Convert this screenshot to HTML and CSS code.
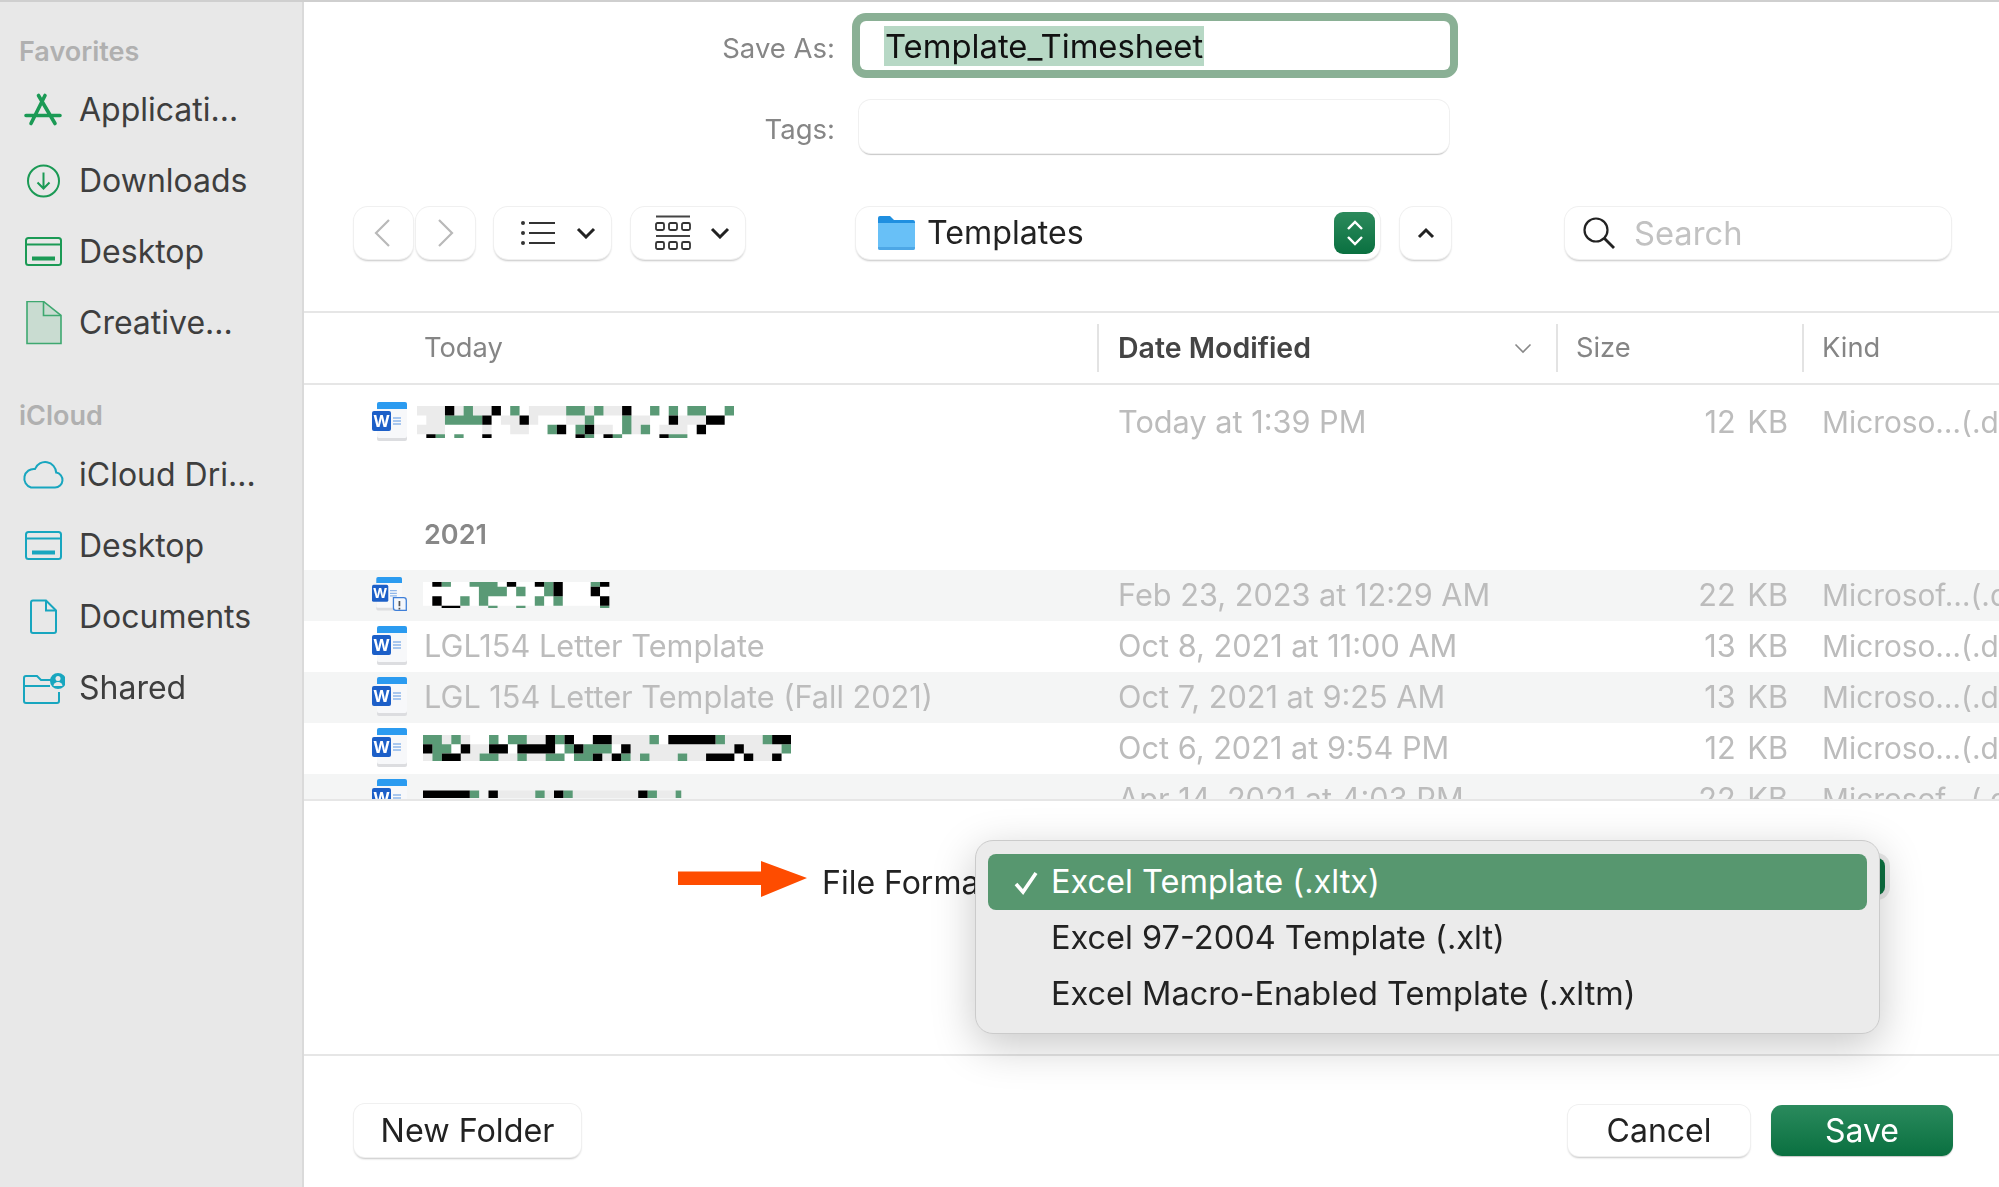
FILE: index.html
```html
<!DOCTYPE html>
<html lang="en">
<head>
<meta charset="utf-8">
<title>Save As</title>
<link rel="stylesheet" href="styles.css">
</head>
<body>
<svg class="defs" width="0" height="0" aria-hidden="true">
  <symbol id="word" viewBox="0 0 36 40">
    <rect x="5" y="2" width="30" height="37" rx="2" fill="#dcdde0"/>
    <rect x="5" y="0" width="30" height="36" rx="2" fill="#f7f8fa"/>
    <path d="M5 7V2a2 2 0 0 1 2-2h26a2 2 0 0 1 2 2v5z" fill="#2b9bf0"/>
    <path d="M21 16h8M21 19h8M21 22h8" stroke="#8fb6ea" stroke-width="1.4"/>
    <rect x="0" y="9" width="19" height="20" rx="2" fill="#1c5fc8"/>
    <text x="9.5" y="25" class="word-w">W</text>
  </symbol>
  <symbol id="desk" viewBox="0 0 44 44">
    <rect x="5" y="8" width="35" height="27" rx="2.5" fill="none" stroke="currentColor" stroke-width="2"/>
    <path d="M5 14.5h35" stroke="currentColor" stroke-width="2"/>
    <path d="M11 28.5h23" stroke="currentColor" stroke-width="4"/>
  </symbol>
</svg>

<div class="window">
  <aside class="sidebar">
    <h2 class="side-head">Favorites</h2>
    <div class="side-item green">
      <svg class="side-ic" viewBox="0 0 44 44"><path d="M17.5 7.500 34 35.500M24 7.500 10 35.500M5 27.500h34" fill="none" stroke="currentColor" stroke-width="3.600" stroke-linecap="round"/></svg>
      <span>Applicati...</span>
    </div>
    <div class="side-item green">
      <svg class="side-ic" viewBox="0 0 44 44"><circle cx="22.5" cy="22" r="15.5" fill="none" stroke="currentColor" stroke-width="2"/><path d="M22.5 13.5v16M16.5 23.5l6 6 6-6" fill="none" stroke="currentColor" stroke-width="2"/></svg>
      <span>Downloads</span>
    </div>
    <div class="side-item green">
      <svg class="side-ic"><use href="#desk"/></svg>
      <span>Desktop</span>
    </div>
    <div class="side-item green">
      <svg class="side-ic" viewBox="0 0 44 44"><path d="M6 .5h16.500L40 14.500v28H6z" fill="#c9dcd1" stroke="#3ea870" stroke-width="1.600"/><path d="M22.500 .5v14H40" fill="none" stroke="#3ea870" stroke-width="1.600"/></svg>
      <span>Creative...</span>
    </div>
    <h2 class="side-head second">iCloud</h2>
    <div class="side-item teal">
      <svg class="side-ic" viewBox="0 0 44 44"><path d="M10 34.500h24a7.500 7.500 0 0 0 1.200-14.900A11 11 0 0 0 14 16a9.500 9.500 0 0 0-4 18.500z" fill="none" stroke="currentColor" stroke-width="2"/></svg>
      <span>iCloud Dri...</span>
    </div>
    <div class="side-item teal">
      <svg class="side-ic"><use href="#desk"/></svg>
      <span>Desktop</span>
    </div>
    <div class="side-item teal">
      <svg class="side-ic" viewBox="0 0 44 44"><path d="M12 5.500h13l10 10V36a2 2 0 0 1-2 2H12a2 2 0 0 1-2-2V7.500a2 2 0 0 1 2-2z" fill="none" stroke="currentColor" stroke-width="2"/><path d="M25 5.500v10h10" fill="none" stroke="currentColor" stroke-width="2"/></svg>
      <span>Documents</span>
    </div>
    <div class="side-item teal">
      <svg class="side-ic" viewBox="0 0 44 44"><path d="M3 35V12a2 2 0 0 1 2-2h11l4 4h10M3 20h26M38 26v9a2 2 0 0 1-2 2H5a2 2 0 0 1-2-2" fill="none" stroke="currentColor" stroke-width="2"/><circle cx="37" cy="15" r="8" fill="currentColor"/><circle cx="37" cy="12.500" r="2.500" fill="#e8e8e8"/><path d="M32.500 20a4.500 4 0 0 1 9 0z" fill="#e8e8e8"/></svg>
      <span>Shared</span>
    </div>
  </aside>

  <main class="main">
    <section class="form">
      <div class="form-row">
        <label class="form-label">Save As:</label>
        <div class="field focused"><span class="selected">Template_Timesheet</span></div>
      </div>
      <div class="form-row tags-row">
        <label class="form-label">Tags:</label>
        <div class="field tags"></div>
      </div>
    </section>

    <section class="toolbar">
      <button class="btn nav prev"><svg width="18" height="30" viewBox="0 0 18 30"><path d="M16 2 3 15l13 13" fill="none" stroke="#b9b9b9" stroke-width="2.200"/></svg></button>
      <button class="btn nav next"><svg width="18" height="30" viewBox="0 0 18 30"><path d="m2 2 13 13L2 28" fill="none" stroke="#b9b9b9" stroke-width="2.200"/></svg></button>
      <button class="btn list">
        <svg width="34" height="26" viewBox="0 0 34 26"><path d="M8 3h26M8 13h26M8 23h26" stroke="#333" stroke-width="2"/><circle cx="2" cy="3" r="2" fill="#333"/><circle cx="2" cy="13" r="2" fill="#333"/><circle cx="2" cy="23" r="2" fill="#333"/></svg>
        <svg class="chev" width="20" height="12" viewBox="0 0 20 12"><path d="m2 2 8 8 8-8" fill="none" stroke="#222" stroke-width="3"/></svg>
      </button>
      <button class="btn view">
        <svg width="36" height="36" viewBox="0 0 36 36"><path d="M1 1.500h34M1 21h34" stroke="#444" stroke-width="2"/><g fill="none" stroke="#333" stroke-width="1.800"><rect x="1" y="8" width="8" height="7" rx="1.500"/><rect x="14" y="8" width="8" height="7" rx="1.500"/><rect x="27" y="8" width="8" height="7" rx="1.500"/><rect x="1" y="27" width="8" height="7" rx="1.500"/><rect x="14" y="27" width="8" height="7" rx="1.500"/><rect x="27" y="27" width="8" height="7" rx="1.500"/></g></svg>
        <svg class="chev" width="20" height="12" viewBox="0 0 20 12"><path d="m2 2 8 8 8-8" fill="none" stroke="#222" stroke-width="3"/></svg>
      </button>
      <button class="btn path">
        <svg width="37" height="36" viewBox="0 0 37 36"><path d="M0 3a2 2 0 0 1 2-2h10l4 4h19a2 2 0 0 1 2 2v6H0z" fill="#1f8fe0"/><path d="M0 8h37v25a2 2 0 0 1-2 2H2a2 2 0 0 1-2-2z" fill="#68c0f7"/><path d="M0 32h37v1a2 2 0 0 1-2 2H2a2 2 0 0 1-2-2z" fill="#4da7e6"/></svg>
        <span class="path-name">Templates</span>
        <span class="stepper"><svg width="20" height="30" viewBox="0 0 20 30"><path d="m3 11 7-7 7 7M3 19l7 7 7-7" fill="none" stroke="#fff" stroke-width="2.400"/></svg></span>
      </button>
      <button class="btn up"><svg width="18" height="12" viewBox="0 0 18 12"><path d="m2 10 7-7 7 7" fill="none" stroke="#222" stroke-width="3"/></svg></button>
      <div class="btn search">
        <svg width="34" height="34" viewBox="0 0 34 34"><circle cx="14" cy="14" r="11.500" fill="none" stroke="#222" stroke-width="2.200"/><path d="m22 22 10 10" stroke="#222" stroke-width="2.800"/></svg>
        <span>Search</span>
      </div>
    </section>

    <section class="cols">
      <div class="col name-col">Today</div>
      <div class="col date-col"><b>Date Modified</b><svg width="18" height="11" viewBox="0 0 18 11"><path d="m1.500 1.500 7.500 7.500 7.500-7.500" fill="none" stroke="#888" stroke-width="1.600"/></svg></div>
      <div class="col">Size</div>
      <div class="col">Kind</div>
    </section>

    <section class="files">
      <div class="row">
        <div class="fname">
          <svg class="doc"><use href="#word"/></svg>
          <svg class="px first" width="317" height="32" viewBox="0 0 34 3.400" preserveAspectRatio="none">
            <path class="px-l" d="M0 .5h3M4 .5h1M6 .5h2M12 .5h4M18 .5h1M20 .5h2M1 1.500h2M9 1.500h2M12 1.500h1M16 1.500h2M23 1.500h2M28 1.500h3M0 2.500h3M7 2.500h1M10 2.500h2M19 2.500h2M23 2.500h1M26 2.500h3"/>
            <path class="px-g" d="M5 .5h1M10 .5h1M16 .5h2M19 .5h1M25 .5h1M27 .5h1M29 .5h2M33 .5h1M3 1.500h4M18 1.500h1M22 1.500h1M14 2.500h1M17 2.500h1M22 2.500h1M24 2.500h1M2 3.500h1M4 3.500h1M18 3.500h1M21 3.500h1M27 3.500h2"/>
            <path class="px-k" d="M3 .5h1M8 .5h1M22 .5h1M7 1.500h1M11 1.500h1M27 1.500h1M31 1.500h2M15 2.500h1M18 2.500h1M30 2.500h1M1 3.500h1M7 3.500h1M17 3.500h1M20 3.500h1M26 3.500h1"/>
          </svg>
        </div>
        <div>Today at 1:39 PM</div>
        <div class="size">12 KB</div>
        <div class="kind">Microso…(.docx)</div>
      </div>

      <h3 class="group">2021</h3>

      <div class="row stripe">
        <div class="fname">
          <svg class="doc" viewBox="0 0 42 42"><use href="#word" width="36" height="40"/><path d="M25 24h12a3 3 0 0 1 3 3v12H28a3 3 0 0 1-3-3z" fill="#f4f7fc" stroke="#3f7fd8" stroke-width="1.500"/><path d="M32 28v6M32 36v2" stroke="#555" stroke-width="2"/></svg>
          <svg class="px second" width="191" height="26" viewBox="0 .5 20.500 2.750" preserveAspectRatio="none">
            <path class="px-w" d="M0 .5h1M3 .5h2M8 .5h1M10 .5h2M15 .5h3M0 1.500h6M9 1.500h1M11 1.500h2M15 1.500h3M19 1.500h1M0 2.500h1M2 2.500h2M5 2.500h1M7 2.500h5M13 2.500h1M15 2.500h4"/>
            <path class="px-g" d="M2 .5h1M5 .5h3M13 .5h1M18 .5h1M6 1.500h3M10 1.500h1M13 1.500h1M4 2.500h1M6 2.500h1M12 2.500h1M14 2.500h1M7 3.500h1M10 3.500h1M19 3.500h1"/>
            <path class="px-k" d="M1 .5h1M9 .5h1M12 .5h1M14 .5h1M19 .5h1M14 1.500h1M18 1.500h1M1 2.500h1M19 2.500h1M2 3.500h2"/>
          </svg>
        </div>
        <div>Feb 23, 2023 at 12:29 AM</div>
        <div class="size">22 KB</div>
        <div class="kind">Microsof…(.docx)</div>
      </div>

      <div class="row">
        <div class="fname"><svg class="doc"><use href="#word"/></svg><span class="ftext">LGL154 Letter Template</span></div>
        <div>Oct 8, 2021 at 11:00 AM</div>
        <div class="size">13 KB</div>
        <div class="kind">Microso…(.docx)</div>
      </div>

      <div class="row stripe">
        <div class="fname"><svg class="doc"><use href="#word"/></svg><span class="ftext">LGL 154 Letter Template (Fall 2021)</span></div>
        <div>Oct 7, 2021 at 9:25 AM</div>
        <div class="size">13 KB</div>
        <div class="kind">Microso…(.docx)</div>
      </div>

      <div class="row">
        <div class="fname">
          <svg class="doc"><use href="#word"/></svg>
          <svg class="px second" width="368" height="26" viewBox="0 0 39 2.800" preserveAspectRatio="none">
            <path class="px-l" d="M2 .5h1M4 .5h1M11 .5h2M20 .5h4M32 .5h4M5 1.500h2M22 1.500h11M34 1.500h4M0 2.500h1M4 2.500h2M8 2.500h2M11 2.500h2M19 2.500h1M22 2.500h1M24 2.500h3M28 2.500h2M35 2.500h2"/>
            <path class="px-g" d="M0 .5h2M3 .5h1M7 .5h1M9 .5h2M14 .5h1M24 .5h1M31 .5h1M36 .5h1M1 1.500h2M15 1.500h1M17 1.500h3M38 1.500h1M1 2.500h1M6 2.500h2M10 2.500h1M13 2.500h2M16 2.500h2M21 2.500h1M23 2.500h1M27 2.500h1"/>
            <path class="px-k" d="M13 .5h1M15 .5h1M18 .5h2M26 .5h5M37 .5h2M0 1.500h1M4 1.500h1M7 1.500h2M10 1.500h4M16 1.500h1M21 1.500h1M33 1.500h1M2 2.500h2M18 2.500h1M20 2.500h1M30 2.500h3M34 2.500h1M37 2.500h1"/>
          </svg>
        </div>
        <div>Oct 6, 2021 at 9:54 PM</div>
        <div class="size">12 KB</div>
        <div class="kind">Microso…(.docx)</div>
      </div>

      <div class="row stripe">
        <div class="fname">
          <svg class="doc"><use href="#word"/></svg>
          <svg class="px second" width="262" height="28" viewBox="0 0 28 3" preserveAspectRatio="none">
            <path class="px-l thin" d="M8 1h4M13 1h1M16 1h7M25 1h2"/>
            <path class="px-g thin" d="M5 1h1M12 1h1M15 1h1M24 1h1M27 1h.6"/>
            <path class="px-k thin" d="M0 1h5M7 1h1M14 1h1M23 1h1"/>
          </svg>
        </div>
        <div>Apr 14, 2021 at 4:03 PM</div>
        <div class="size">22 KB</div>
        <div class="kind">Microsof…(.docx)</div>
      </div>
    </section>

    <section class="format">
      <svg class="arrow" width="129" height="36" viewBox="0 0 129 36"><path d="M0 10.500h83V0l46 17-46 19V24H0z" fill="#fe4c00"/></svg>
      <span class="format-label">File Format:</span>
      <div class="popup-stub"></div>
      <div class="menu">
        <div class="menu-item active"><svg class="check" width="24" height="24" viewBox="0 0 24 24"><path d="m2 13 7 8L22 2" fill="none" stroke="#fff" stroke-width="3.600"/></svg>Excel Template (.xltx)</div>
        <div class="menu-item">Excel 97-2004 Template (.xlt)</div>
        <div class="menu-item">Excel Macro-Enabled Template (.xltm)</div>
      </div>
    </section>

    <footer class="footer">
      <button class="btn action new">New Folder</button>
      <button class="btn action cancel">Cancel</button>
      <button class="btn action save">Save</button>
    </footer>
  </main>
</div>
</body>
</html>
```

FILE: styles.css
```css
* { box-sizing: border-box; }
html, body { margin: 0; padding: 0; }
body {
  width: 1999px;
  height: 1187px;
  overflow: hidden;
  background: #fff;
  font-family: Inter, "Noto Sans", sans-serif;
  color: #222;
}
.defs { position: absolute; }
.word-w { font: 700 16px Inter, sans-serif; fill: #fff; text-anchor: middle; }

.window {
  display: grid;
  grid-template-columns: 304px 1fr;
  height: 1187px;
  border-top: 2px solid #cfcfcf;
  filter: blur(.45px);
}

/* sidebar */
.sidebar {
  background: #e8e8e8;
  border-right: 2px solid #dadada;
  padding-top: 30px;
}
.side-head {
  margin: 0 0 2px;
  padding-left: 19px;
  height: 40px;
  font-size: 27px;
  line-height: 40px;
  font-weight: 600;
  color: #b0b0b0;
}
.side-head.second { margin-top: 38px; margin-bottom: 3px; }
.side-item {
  display: flex;
  align-items: center;
  gap: 14px;
  height: 71px;
  padding-left: 21px;
  font-size: 32px;
  color: #3e3e3e;
}
.side-ic { width: 44px; height: 44px; flex: none; }
.green .side-ic { color: #1b9a55; }
.teal .side-ic { color: #18a6bf; }

/* form */
.main { display: flex; flex-direction: column; min-width: 0; }
.form { padding-top: 19px; }
.form-row { display: flex; align-items: center; height: 49px; }
.tags-row { height: 53px; margin-top: 30px; }
.form-label {
  width: 531px;
  padding-top: 4px;
  text-align: right;
  font-size: 27.500px;
  color: #868686;
}
.field {
  margin-left: 24px;
  width: 590px;
  height: 100%;
  background: #fff;
  border-radius: 8px;
  display: flex;
  align-items: center;
}
.field.focused {
  margin-left: 25px;
  box-shadow: 0 0 0 8px #8ab095;
  border-radius: 6px;
  padding-left: 24px;
}
.field.tags { box-shadow: 0 0 0 1px #f0f0f0, 0 2px 1px #c8c8c8; border-radius: 12px; }
.selected {
  background: #b7d8c5;
  color: #111;
  font-size: 32.800px;
  line-height: 40px;
  padding: 0 1px;
}

/* toolbar */
.toolbar {
  display: flex;
  align-items: stretch;
  height: 52px;
  margin-top: 54px;
  padding-left: 50px;
}
.btn {
  font-family: inherit;
  border: 0;
  padding: 0;
  background: #fff;
  border-radius: 14px;
  box-shadow: 0 0 0 1px #f0f0f0, 0 2px 2px #c6c6c6;
  display: flex;
  align-items: center;
  justify-content: center;
}
.nav { width: 59px; }
.nav.prev { padding-right: 4px; }
.nav.next { margin-left: 3px; }
.list { width: 117px; margin-left: 19px; justify-content: flex-start; padding-left: 27px; gap: 21px; }
.view { width: 114px; margin-left: 20px; justify-content: flex-start; padding-left: 24px; gap: 19px; }
.path {
  width: 524px;
  margin-left: 111px;
  justify-content: flex-start;
  padding-left: 22px;
  gap: 12px;
  font-size: 32.200px;
  color: #222;
}
.path-name { flex: 1; text-align: left; padding-bottom: 2px; }
.stepper {
  width: 41px;
  height: 42px;
  margin-right: 5px;
  border-radius: 9px;
  background: linear-gradient(#2c8a5c, #0a7040);
  display: flex;
  align-items: center;
  justify-content: center;
}
.up { width: 51px; margin-left: 20px; }
.search {
  width: 386px;
  margin-left: 114px;
  justify-content: flex-start;
  padding-left: 17px;
  gap: 18px;
  font-size: 32.700px;
  color: #c2c2c2;
}

/* column header */
.cols, .row {
  display: grid;
  grid-template-columns: 793px 459px 246px 1fr;
}
.cols {
  margin-top: 52px;
  height: 74px;
  align-items: center;
  border-top: 2px solid #e6e6e6;
  border-bottom: 2px solid #e6e6e6;
  font-size: 27.300px;
  color: #858585;
}
.col {
  height: 48px;
  line-height: 48px;
  padding-left: 18px;
  border-left: 2px solid #e3e3e3;
  white-space: nowrap;
}
.name-col { padding-left: 120px; border-left: 0; }
.date-col { display: flex; align-items: center; justify-content: space-between; padding-right: 24px; padding-left: 19px; }
.date-col b { font-weight: 600; font-size: 28.500px; color: #444; }

/* file list */
.files {
  height: 416px;
  padding-top: 12px;
  overflow: hidden;
  border-bottom: 2px solid #e6e6e6;
  position: relative;
  font-size: 30.700px;
  color: #bcbcbc;
}
.row {
  height: 51px;
  padding-bottom: 2px;
  align-items: center;
  white-space: nowrap;
}
.row > div { padding-left: 21px; overflow: hidden; }
.row > .fname {
  display: flex;
  align-items: center;
  gap: 6px;
  padding-left: 68px;
}
.row > .size { text-align: right; padding-right: 14px; padding-left: 0; word-spacing: 3px; }
.row > .kind { padding-left: 20px; font-size: 29.800px; }
.stripe { background: #f4f5f5; }
.doc { width: 36px; height: 40px; flex: none; }
.ftext { padding-left: 10px; }
.px { flex: none; }
.px.first { margin-left: 3px; }
.px.second { margin-left: 9px; }
.px path { fill: none; stroke-width: 1; }
.px path.thin { stroke-width: .8; }
.px-g { stroke: #5a9a76; }
.px-k { stroke: #000; }
.px-l { stroke: #ebebeb; }
.px-w { stroke: #fff; }
.group {
  margin: 0;
  height: 122px;
  padding-top: 67px;
  padding-left: 120px;
  line-height: 40px;
  font-size: 27px;
  font-weight: 600;
  color: #888;
}

/* format area */
.format {
  position: relative;
  height: 255px;
  border-bottom: 2px solid #e6e6e6;
  padding: 60px 0 0 374px;
  display: flex;
  align-items: flex-start;
  gap: 15px;
}
.format-label { font-size: 32px; line-height: 44px; color: #222; white-space: nowrap; }
.popup-stub {
  position: absolute;
  left: 1400px;
  top: 57px;
  width: 181px;
  height: 37px;
  border-radius: 8px;
  background: #0c7040;
  box-shadow: 0 0 0 5px #e9e9e9;
}
.menu {
  position: absolute;
  left: 671px;
  top: 39px;
  width: 905px;
  height: 194px;
  padding: 13px 12px;
  background: #ebebeb;
  border: 1px solid #cbcbcb;
  border-radius: 18px;
  box-shadow: 0 12px 44px rgba(0, 0, 0, .22);
}
.menu-item {
  position: relative;
  height: 56px;
  line-height: 56px;
  padding-left: 63px;
  font-size: 32.500px;
  color: #222;
  border-radius: 8px;
  white-space: nowrap;
}
.menu-item.active { background: #57976f; color: #fff; }
.check { position: absolute; left: 26px; top: 17px; }

/* footer */
.footer {
  flex: 1;
  display: flex;
  align-items: flex-start;
  padding: 49px 46px 0 50px;
}
.action {
  height: 51px;
  width: 182px;
  border-radius: 11px;
  font-size: 32px;
  color: #222;
}
.new { width: 227px; height: 53px; margin-top: -1px; margin-right: auto; font-size: 32.300px; }
.cancel { margin-right: 21px; }
.save {
  color: #fff;
  background: linear-gradient(#2a8a5d, #0a7040);
  box-shadow: 0 1px 1px #c6c6c6;
}
```
